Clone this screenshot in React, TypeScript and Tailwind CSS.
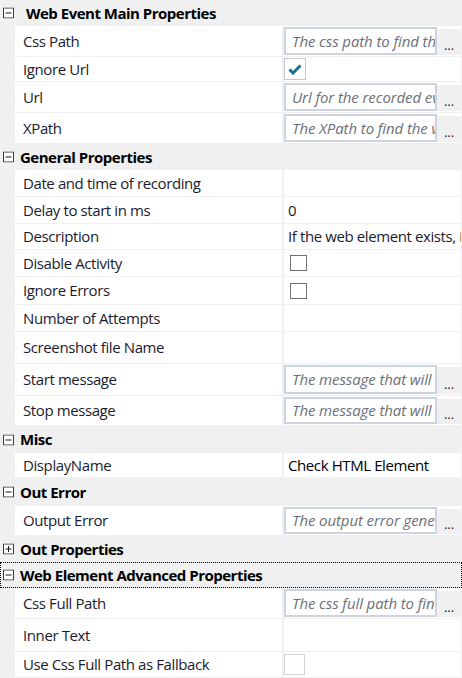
import React from "react";

type Val =
  | { k: "input"; ph: string }
  | { k: "checkBig" }
  | { k: "checkSmall" }
  | { k: "checkLight" }
  | { k: "text"; t: string; c?: string }
  | { k: "empty" };

type Row =
  | { type: "header"; title: string; h: number; open: boolean; pl?: string; focus?: boolean }
  | { type: "prop"; label: string; h: number; val: Val };

const rows: Row[] = [
  { type: "header", title: "Web Event Main Properties", h: 26, open: true, pl: "pl-[26px]" },
  { type: "prop", label: "Css Path", h: 31, val: { k: "input", ph: "The css path to find the web element" } },
  { type: "prop", label: "Ignore Url", h: 25, val: { k: "checkBig" } },
  { type: "prop", label: "Url", h: 31, val: { k: "input", ph: "Url for the recorded event" } },
  { type: "prop", label: "XPath", h: 31, val: { k: "input", ph: "The XPath to find the web element" } },
  { type: "header", title: "General Properties", h: 26, open: true },
  { type: "prop", label: "Date and time of recording", h: 27, val: { k: "empty" } },
  { type: "prop", label: "Delay to start in ms", h: 27, val: { k: "text", t: "0", c: "text-[#1a1a1a]" } },
  { type: "prop", label: "Description", h: 26, val: { k: "text", t: "If the web element exists, it will return true" } },
  { type: "prop", label: "Disable Activity", h: 27, val: { k: "checkSmall" } },
  { type: "prop", label: "Ignore Errors", h: 28, val: { k: "checkSmall" } },
  { type: "prop", label: "Number of Attempts", h: 27, val: { k: "empty" } },
  { type: "prop", label: "Screenshot file Name", h: 32, val: { k: "empty" } },
  { type: "prop", label: "Start message", h: 32, val: { k: "input", ph: "The message that will be logged" } },
  { type: "prop", label: "Stop message", h: 30, val: { k: "input", ph: "The message that will be logged" } },
  { type: "header", title: "Misc", h: 27, open: true },
  { type: "prop", label: "DisplayName", h: 25, val: { k: "text", t: "Check HTML Element", c: "text-black" } },
  { type: "header", title: "Out Error", h: 28, open: true },
  { type: "prop", label: "Output Error", h: 30, val: { k: "input", ph: "The output error generated" } },
  { type: "header", title: "Out Properties", h: 26, open: false },
  { type: "header", title: "Web Element Advanced Properties", h: 26, open: true, focus: true },
  { type: "prop", label: "Css Full Path", h: 31, val: { k: "input", ph: "The css full path to find the web element" } },
  { type: "prop", label: "Inner Text", h: 33, val: { k: "empty" } },
  { type: "prop", label: "Use Css Full Path as Fallback", h: 26, val: { k: "checkLight" } },
];

const font = { fontFamily: '"Open Sans", "Noto Sans", sans-serif' };

function Expander({ open }: { open: boolean }) {
  return (
    <svg width="11" height="11" viewBox="0 0 11 11" className="shrink-0">
      <rect x="0.5" y="0.5" width="10" height="10" fill="#fff" stroke="#3a3a3a" strokeWidth="1" />
      <line x1="2.5" y1="5.5" x2="8.5" y2="5.5" stroke="#1a1a1a" strokeWidth="1" />
      {!open && <line x1="5.5" y1="2.5" x2="5.5" y2="8.5" stroke="#1a1a1a" strokeWidth="1" />}
    </svg>
  );
}

function Value({ v }: { v: Val }) {
  switch (v.k) {
    case "input":
      return (
        <div className="flex h-full items-stretch pt-[1px] pb-[1px]">
          <div className="flex w-[153px] shrink-0 items-center overflow-hidden border-2 border-[#cdd3df] bg-white pl-[6px]">
            <span className="block w-full overflow-hidden whitespace-nowrap text-[15px] italic tracking-[-0.1px] text-[#6c6f78]">
              {v.ph}
            </span>
          </div>
          <div className="mt-[2px] flex flex-1 items-end justify-center bg-[#f0f0f0] pb-[3px] text-[13px] leading-none text-[#1a1a1a]">
            ...
          </div>
        </div>
      );
    case "checkBig":
      return (
        <div className="flex h-full items-center">
          <div className="flex h-[22px] w-[22px] items-center justify-center border border-[#c6c6c6] bg-white">
            <svg width="14" height="11" viewBox="0 0 14 11">
              <path d="M1.5 5.5 L5 9 L12.5 1.5" fill="none" stroke="#1f6b98" strokeWidth="3" />
            </svg>
          </div>
        </div>
      );
    case "checkSmall":
      return (
        <div className="flex h-full items-center pl-[6px]">
          <div className="h-[16px] w-[17px] border border-[#707070] bg-white" />
        </div>
      );
    case "checkLight":
      return (
        <div className="flex h-full items-center">
          <div className="h-[21px] w-[21px] border border-[#d4d4d4] bg-white" />
        </div>
      );
    case "text":
      return (
        <div className="flex h-full items-center overflow-hidden pl-[4px]">
          <span className={`block w-full overflow-hidden whitespace-nowrap text-[15px] tracking-[-0.4px] ${v.c ?? "text-[#1b1b2e]"}`}>
            {v.t}
          </span>
        </div>
      );
    default:
      return null;
  }
}

export default function App() {
  return (
    <div className="h-[678px] w-[462px] overflow-hidden bg-[#f0f0f0]" style={font}>
      {rows.map((r, i) =>
        r.type === "header" ? (
          <div
            key={i}
            className={`relative flex items-center bg-[#f0f0f0] ${r.focus ? "border border-dotted border-black" : ""}`}
            style={{ height: r.h }}
          >
            <div className={`absolute top-1/2 -translate-y-1/2 ${r.focus ? "left-[2px]" : "left-[3px]"}`}>
              <Expander open={r.open} />
            </div>
            <span
              className={`${r.pl ?? (r.focus ? "pl-[19px]" : "pl-[20px]")} whitespace-nowrap text-[15px] font-bold tracking-[-0.5px] text-black`}
            >
              {r.title}
            </span>
          </div>
        ) : (
          <div key={i} className="flex border-b border-[#f0f0f0]" style={{ height: r.h }}>
            <div className="w-[15px] shrink-0 bg-[#f0f0f0]" />
            <div className="flex w-[267px] shrink-0 items-center overflow-hidden whitespace-nowrap bg-white pl-[8px] text-[15px] tracking-[-0.4px] text-[#1b1b2e]">
              {r.label}
            </div>
            <div className="w-[2px] shrink-0 bg-[#f0f0f0]" />
            <div className="min-w-0 flex-1 overflow-hidden bg-white">
              <Value v={r.val} />
            </div>
            <div className="w-[1px] shrink-0 bg-[#f0f0f0]" />
          </div>
        )
      )}
    </div>
  );
}
